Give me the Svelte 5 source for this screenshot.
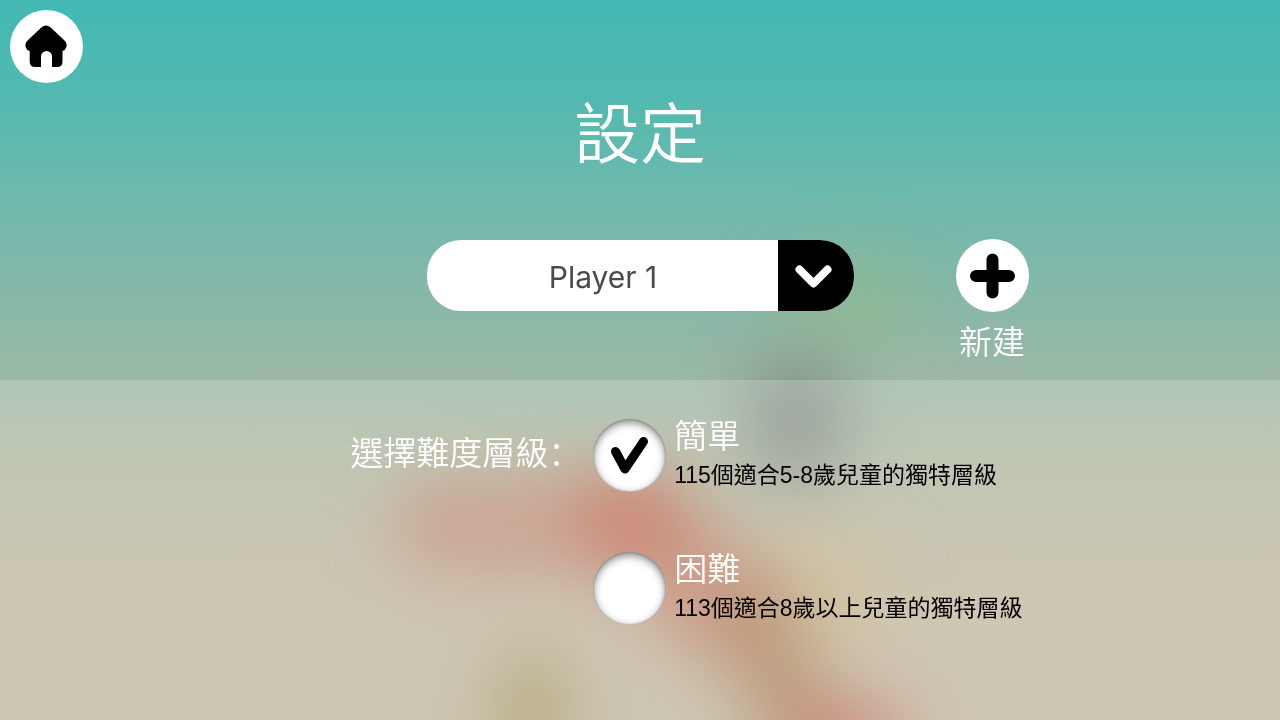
<script lang="ts">
  const players = ['Player 1'];

  const levels = [
    { id: 'easy', name: '簡單', detail: '115個適合5-8歲兒童的獨特層級' },
    { id: 'hard', name: '困難', detail: '113個適合8歲以上兒童的獨特層級' },
  ];

  let player = $state(players[0]);
  let level = $state('easy');
</script>

<main class="screen">
  <svg class="backdrop" viewBox="0 0 1280 720" preserveAspectRatio="xMidYMid slice" aria-hidden="true">
    <defs>
      <filter id="haze" x="-100%" y="-100%" width="300%" height="300%" color-interpolation-filters="sRGB">
        <feGaussianBlur stdDeviation="33" />
      </filter>
    </defs>
    <g filter="url(#haze)">
      <ellipse cx="850" cy="300" rx="70" ry="45" fill="#98b982" opacity="0.5" />
      <ellipse cx="796" cy="422" rx="48" ry="68" fill="#7f8681" opacity="0.85" />
      <ellipse cx="820" cy="590" rx="70" ry="60" fill="#c8b284" opacity="0.6" />
      <path d="M440 526 L620 522" stroke="#c47b68" stroke-width="96" stroke-linecap="round" opacity="0.65" />
      <path d="M620 520 L730 610" stroke="#c2654f" stroke-width="110" stroke-linecap="round" opacity="0.6" />
      <path d="M640 510 L656 516" stroke="#c2573f" stroke-width="80" stroke-linecap="round" opacity="0.45" />
      <path d="M755 620 L800 730" stroke="#ab7a51" stroke-width="80" stroke-linecap="round" opacity="0.8" />
      <ellipse cx="850" cy="735" rx="60" ry="30" fill="#c25547" opacity="0.8" />
      <ellipse cx="532" cy="725" rx="44" ry="84" fill="#a3945f" opacity="0.75" />
    </g>
  </svg>

  <section class="top">
    <button class="round" aria-label="主頁">
      <svg viewBox="0 0 73 73">
        <path
          d="M31.6 17.3 Q36 13.7 40.4 17.3 L54.3 30.2 Q57.4 33.2 56.4 37 Q55.4 40.4 52.5 41 V51.5 Q52.5 57 47 57 H42 V46.4 A5.5 5.5 0 0 0 31 46.4 V57 H25.2 Q19.7 57 19.7 51.5 V41 Q16.4 40.2 15.6 37 Q14.8 33 17.8 30.2 Z"
        />
      </svg>
    </button>

    <h1>設定</h1>

    <div class="player-row">
      <div class="picker">
        <select bind:value={player} aria-label="Player">
          {#each players as name}
            <option>{name}</option>
          {/each}
        </select>
        <span class="arrow">
          <svg viewBox="0 0 76 71">
            <path d="M21.5 29.5 L35.5 43.5 L49.5 29.5" />
          </svg>
        </span>
      </div>

      <div class="create">
        <button class="round" id="create" aria-labelledby="create-label">
          <svg viewBox="0 0 73 73">
            <path class="plus" d="M36.5 20.5 V53.5 M20 37 H53" />
          </svg>
        </button>
        <label id="create-label" for="create">新建</label>
      </div>
    </div>
  </section>

  <section class="panel" role="radiogroup" aria-labelledby="level-label">
    <p id="level-label">選擇難度層級<span class="colon">：</span></p>

    <div class="levels">
      {#each levels as item}
        <label class="level">
          <span class="radio">
            <input type="radio" name="level" value={item.id} bind:group={level} />
            {#if level === item.id}
              <svg viewBox="0 0 73 73">
                <path d="M22.5 32.5 L32 50 L50.5 22.5" />
              </svg>
            {/if}
          </span>
          <span class="text">
            <span class="name">{item.name}</span>
            <span class="detail">{item.detail}</span>
          </span>
        </label>
      {/each}
    </div>
  </section>
</main>

<style>
  :global(body) {
    margin: 0;
  }

  .screen {
    position: relative;
    display: flex;
    flex-direction: column;
    min-height: 100vh;
    overflow: hidden;
    color: #fff;
    font-family: 'Noto Sans CJK TC', sans-serif;
    font-weight: 350;
    background: linear-gradient(
      #43b9b4 0%,
      #53b9b0 14%,
      #70b9ad 28%,
      #88b8a8 42%,
      #9db8a5 53%,
      #afb8a1 63%,
      #bbb89f 75%,
      #c2b9a0 85%
    );
  }

  .backdrop {
    position: absolute;
    inset: 0;
    width: 100%;
    height: 100%;
  }

  .top {
    position: relative;
    padding: 10px 10px 12px;
  }

  .round {
    display: block;
    width: 73px;
    height: 73px;
    padding: 0;
    border: 0;
    border-radius: 50%;
    background: #fff;
    cursor: pointer;
  }

  .round svg,
  .arrow svg {
    display: block;
  }

  .plus {
    stroke: #000;
    stroke-width: 12;
    stroke-linecap: round;
  }

  h1 {
    margin: 0 0 64px;
    font-size: 66px;
    font-weight: 350;
    line-height: 92px;
    text-align: center;
  }

  .player-row {
    display: grid;
    grid-template-columns: 1fr minmax(auto, 427px) 1fr;
    gap: 102px;
  }

  .picker {
    position: relative;
    grid-column: 2;
    height: 71px;
    margin-top: 1px;
    border-radius: 34px;
    background: #fff;
    overflow: hidden;
  }

  select {
    width: 100%;
    height: 100%;
    padding: 2px 74px 0 0;
    border: 0;
    appearance: none;
    background: none;
    color: #4a4a4a;
    font-family: Inter, sans-serif;
    font-size: 30px;
    font-weight: 400;
    text-align: center;
    text-align-last: center;
  }

  .arrow {
    position: absolute;
    top: 0;
    right: 0;
    width: 76px;
    height: 100%;
    background: #000;
    pointer-events: none;
  }

  .arrow path {
    fill: none;
    stroke: #fff;
    stroke-width: 8;
    stroke-linecap: round;
    stroke-linejoin: round;
  }

  .create {
    display: flex;
    flex-direction: column;
    align-items: center;
    justify-self: start;
  }

  .create label {
    font-size: 33px;
    line-height: 56px;
  }

  .panel {
    position: relative;
    flex: 1;
    display: grid;
    grid-template-columns: 11fr 13fr;
    gap: 12px;
    padding: 35px 0;
    background: rgba(255, 255, 255, 0.2);
  }

  .panel p {
    margin: 0;
    font-size: 33px;
    line-height: 72px;
    text-align: right;
  }

  .colon {
    font-family: 'Noto Sans CJK SC', sans-serif;
  }

  .levels {
    display: flex;
    flex-direction: column;
    gap: 52px;
  }

  .level {
    display: flex;
    align-items: center;
    gap: 8px;
  }

  .radio {
    display: grid;
    flex: none;
    width: 73px;
    height: 73px;
  }

  .radio > * {
    grid-area: 1 / 1;
  }

  .radio input {
    width: 100%;
    height: 100%;
    margin: 0;
    border-radius: 50%;
    appearance: none;
    background: #fff;
    box-shadow:
      inset 0 3px 9px rgba(0, 0, 0, 0.5),
      inset 0 0 2px rgba(0, 0, 0, 0.4);
  }

  .radio svg {
    pointer-events: none;
  }

  .radio path {
    fill: none;
    stroke: #000;
    stroke-width: 9;
    stroke-linecap: round;
    stroke-linejoin: round;
  }

  .text {
    display: flex;
    flex-direction: column;
  }

  .name {
    font-size: 33px;
    line-height: 39px;
  }

  .detail {
    color: #000;
    font-family: 'Liberation Sans', 'Noto Sans CJK TC', sans-serif;
    font-size: 23px;
    font-weight: 400;
    line-height: 42px;
  }
</style>
